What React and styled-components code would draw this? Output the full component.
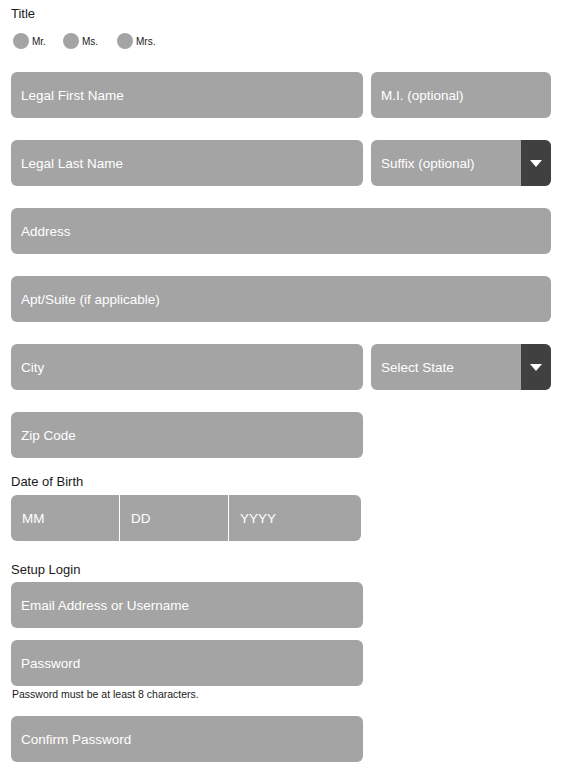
import styled, { createGlobalStyle } from "styled-components";

const GlobalStyle = createGlobalStyle`
    body {
        margin: 0;
        background: #ffffff;
        font-family: "Liberation Sans", Arial, sans-serif;
    }
`;

const Form = styled.form`
    display: flex;
    flex-direction: column;
    padding: 6px 12px 16px 11px;
    width: 540px;
`;

const Label = styled.div`
    font-size: 13px;
    line-height: 16px;
    color: #1a1a1a;
    margin-top: ${(p) => p.$top || 0}px;
    margin-bottom: ${(p) => p.$bottom || 0}px;
`;

const RadioRow = styled.div`
    display: flex;
    margin-top: 11px;
    margin-left: 2px;
    margin-bottom: 23px;
`;

const RadioOption = styled.label`
    display: flex;
    align-items: center;
    margin-right: ${(p) => p.$space}px;
    font-size: 10px;
    color: #1a1a1a;
`;

const Dot = styled.span`
    width: 16px;
    height: 16px;
    border-radius: 50%;
    background: #a4a4a4;
    margin-right: 3px;
`;

const Row = styled.div`
    display: flex;
    gap: 8px;
    margin-bottom: ${(p) => (p.$bottom !== undefined ? p.$bottom : 22)}px;
`;

const Field = styled.div`
    display: flex;
    align-items: center;
    box-sizing: border-box;
    width: ${(p) => p.$width}px;
    height: 46px;
    padding-left: 10px;
    background: #a4a4a4;
    border-radius: 6px;
    color: #ffffff;
    font-size: 13.5px;
    overflow: hidden;
`;

const SelectField = styled(Field)`
    justify-content: space-between;
    padding-right: 0;
`;

const Arrow = styled.span`
    display: flex;
    align-items: center;
    justify-content: center;
    width: 30px;
    height: 100%;
    background: #404040;
`;

const DateGroup = styled.div`
    display: flex;
    width: 350px;
    height: 46px;
    border-radius: 6px;
    overflow: hidden;
    margin-bottom: 22px;
`;

const DatePart = styled.div`
    display: flex;
    align-items: center;
    box-sizing: border-box;
    width: ${(p) => p.$width}px;
    padding-left: 11px;
    background: #a4a4a4;
    color: #ffffff;
    font-size: 13.5px;
    border-left: ${(p) => (p.$first ? "none" : "1px solid #ffffff")};
`;

const Hint = styled.div`
    font-size: 10.5px;
    line-height: 14px;
    color: #1a1a1a;
    margin: 1px 0 15px 1px;
`;

function Caret() {
    return (
        <svg width="12" height="7" viewBox="0 0 12 7">
            <polygon points="0,0 12,0 6,7" fill="#ffffff" />
        </svg>
    );
}

export default function App() {
    return (
        <>
            <GlobalStyle />
            <Form>
                <Label>Title</Label>
                <RadioRow>
                    <RadioOption $space={17}><Dot />Mr.</RadioOption>
                    <RadioOption $space={19}><Dot />Ms.</RadioOption>
                    <RadioOption $space={0}><Dot />Mrs.</RadioOption>
                </RadioRow>

                <Row>
                    <Field $width={352}>Legal First Name</Field>
                    <Field $width={180}>M.I. (optional)</Field>
                </Row>
                <Row>
                    <Field $width={352}>Legal Last Name</Field>
                    <SelectField $width={180}>
                        Suffix (optional)
                        <Arrow><Caret /></Arrow>
                    </SelectField>
                </Row>
                <Row>
                    <Field $width={540}>Address</Field>
                </Row>
                <Row>
                    <Field $width={540}>Apt/Suite (if applicable)</Field>
                </Row>
                <Row>
                    <Field $width={352}>City</Field>
                    <SelectField $width={180}>
                        Select State
                        <Arrow><Caret /></Arrow>
                    </SelectField>
                </Row>
                <Row $bottom={16}>
                    <Field $width={352}>Zip Code</Field>
                </Row>

                <Label $bottom={5}>Date of Birth</Label>
                <DateGroup>
                    <DatePart $first $width={108}>MM</DatePart>
                    <DatePart $width={109}>DD</DatePart>
                    <DatePart $width={133}>YYYY</DatePart>
                </DateGroup>

                <Label $top={-1} $bottom={4}>Setup Login</Label>
                <Row $bottom={12}>
                    <Field $width={352}>Email Address or Username</Field>
                </Row>
                <Row $bottom={0}>
                    <Field $width={352}>Password</Field>
                </Row>
                <Hint>Password must be at least 8 characters.</Hint>
                <Row $bottom={0}>
                    <Field $width={352}>Confirm Password</Field>
                </Row>
            </Form>
        </>
    );
}
